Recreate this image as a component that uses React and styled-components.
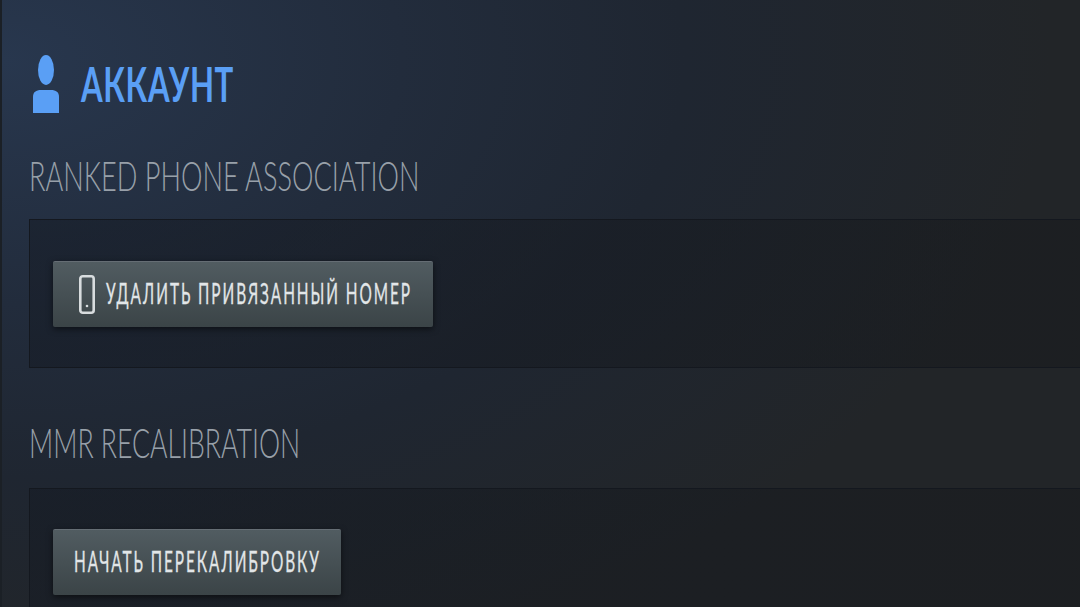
import React from "react";
import styled, { createGlobalStyle } from "styled-components";

const Global = createGlobalStyle`
  html, body { margin: 0; height: 100%; background: #212528; overflow: hidden; }
`;

const Page = styled.div`
  width: 1080px;
  height: 607px;
  box-sizing: border-box;
  overflow: hidden;
  padding: 55px 0 0 27px;
  border-left: 2px solid #1b2026;
  background:
    radial-gradient(ellipse 1050px 640px at 0% 10%, #28374e 0%, #222c3c 38%, #1f2631 65%, rgba(33, 37, 40, 0) 100%),
    #222528;
  font-family: "Lato", "Liberation Sans", sans-serif;
`;

const Header = styled.div`
  display: flex;
  align-items: center;
  height: 58px;
  gap: 22px;
  margin-left: 4px;
`;

const Title = styled.h1`
  margin: 0;
  font-size: 48px;
  font-weight: 700;
  line-height: 58px;
  color: #5a9ff5;
  letter-spacing: 1px;
  transform: scaleX(0.65);
  transform-origin: left center;
  white-space: nowrap;
`;

const SectionTitle = styled.h2`
  margin: ${(p) => p.$top}px 0 0;
  height: 49px;
  font-size: 41px;
  font-weight: 300;
  line-height: 49px;
  color: #98a0a9;
  white-space: nowrap;
  transform: scaleX(${(p) => p.$squeeze});
  transform-origin: left center;
`;

const Panel = styled.section`
  margin-top: ${(p) => p.$top}px;
  height: 149px;
  box-sizing: border-box;
  padding: ${(p) => p.$padTop}px 0 0 23px;
  background: linear-gradient(90deg, rgba(20, 25, 34, 0.5), rgba(24, 26, 29, 0.55));
  border: 1px solid #14181f;
  border-right: 0;
`;

const Button = styled.button`
  display: flex;
  align-items: center;
  width: ${(p) => p.$width}px;
  height: 66px;
  box-sizing: border-box;
  padding: 0 0 4px ${(p) => p.$pad}px;
  gap: 11px;
  border: 0;
  border-top: 1px solid #656d74;
  border-radius: 2px;
  background: linear-gradient(180deg, #515c61 0%, #3b4447 100%);
  box-shadow: 0 2px 6px rgba(0, 0, 0, 0.55);
`;

const ButtonLabel = styled.span`
  font-family: "Lato", "Liberation Sans", sans-serif;
  font-size: 28px;
  font-weight: 400;
  letter-spacing: 3.5px;
  color: #e2e6e8;
  -webkit-text-stroke: 0.3px #e2e6e8;
  white-space: nowrap;
  transform: scaleX(0.55);
  transform-origin: left center;
`;

const PhoneSvg = styled.svg`
  flex-shrink: 0;
  margin-top: 4px;
`;

const UserIcon = () => (
  <svg width="26" height="58" viewBox="0 0 26 58" fill="#5a9ff5">
    <ellipse cx="13" cy="15" rx="8" ry="15" />
    <path d="M0 58V42c0-5 3-7 8-7h10c5 0 8 2 8 7v16z" />
  </svg>
);

const PhoneIcon = () => (
  <PhoneSvg width="16" height="39" viewBox="0 0 16 39" fill="none">
    <rect x="1.3" y="1.3" width="13.4" height="36.4" rx="2.5" stroke="#d8dcde" strokeWidth="2.6" />
    <circle cx="8" cy="31" r="1.3" fill="#d8dcde" />
  </PhoneSvg>
);

export default function App() {
  return (
    <Page>
      <Global />
      <Header>
        <UserIcon />
        <Title>АККАУНТ</Title>
      </Header>
      <SectionTitle $top={38} $squeeze={0.662}>RANKED PHONE ASSOCIATION</SectionTitle>
      <Panel $top={19} $padTop={41}>
        <Button $width={380} $pad={26}>
          <PhoneIcon />
          <ButtonLabel>УДАЛИТЬ ПРИВЯЗАННЫЙ НОМЕР</ButtonLabel>
        </Button>
      </Panel>
      <SectionTitle $top={50} $squeeze={0.65}>MMR RECALIBRATION</SectionTitle>
      <Panel $top={21} $padTop={40}>
        <Button $width={288} $pad={21}>
          <ButtonLabel>НАЧАТЬ ПЕРЕКАЛИБРОВКУ</ButtonLabel>
        </Button>
      </Panel>
    </Page>
  );
}
